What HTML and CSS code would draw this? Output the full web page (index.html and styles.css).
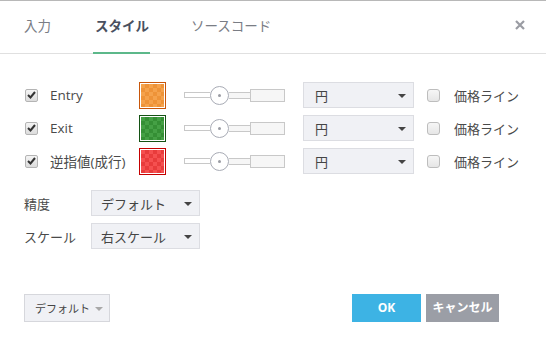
FILE: index.html
```html
<!DOCTYPE html>
<html>

<head>
    <title>スタイル</title>
    <link rel="stylesheet" href="styles.css">
</head>

<body>
    <div class="dialog">
        <div class="header">
            <div class="tab">入力</div>
            <div class="tab active">スタイル</div>
            <div class="tab">ソースコード</div>
            <div class="close">
                <svg width="10" height="10" viewBox="0 0 10 10">
                    <path d="M1 1 L9 9 M9 1 L1 9" stroke="#9a9ca3" stroke-width="2.2"/>
                </svg>
            </div>
        </div>

        <div class="content">
            <div class="plots">
                <div class="plot-row">
                    <span class="check checked"><svg width="9" height="8" viewBox="0 0 9 8"><path d="M1 4 L3.5 6.5 L8 1" stroke="#333" stroke-width="2" fill="none"/></svg></span>
                    <span class="plot-label">Entry</span>
                    <span class="swatch orange"><span class="swatch-fill"></span></span>
                    <span class="slider">
                        <span class="track-left"></span>
                        <span class="thumb"><span class="dot"></span></span>
                        <span class="track-mid"></span>
                        <span class="track-box"></span>
                    </span>
                    <div class="select wide">円<span class="arrow"></span></div>
                    <span class="check"></span>
                    <span class="price-label">価格ライン</span>
                </div>
                <div class="plot-row">
                    <span class="check checked"><svg width="9" height="8" viewBox="0 0 9 8"><path d="M1 4 L3.5 6.5 L8 1" stroke="#333" stroke-width="2" fill="none"/></svg></span>
                    <span class="plot-label">Exit</span>
                    <span class="swatch green"><span class="swatch-fill"></span></span>
                    <span class="slider">
                        <span class="track-left"></span>
                        <span class="thumb"><span class="dot"></span></span>
                        <span class="track-mid"></span>
                        <span class="track-box"></span>
                    </span>
                    <div class="select wide">円<span class="arrow"></span></div>
                    <span class="check"></span>
                    <span class="price-label">価格ライン</span>
                </div>
                <div class="plot-row">
                    <span class="check checked"><svg width="9" height="8" viewBox="0 0 9 8"><path d="M1 4 L3.5 6.5 L8 1" stroke="#333" stroke-width="2" fill="none"/></svg></span>
                    <span class="plot-label">逆指値(成行)</span>
                    <span class="swatch red"><span class="swatch-fill"></span></span>
                    <span class="slider">
                        <span class="track-left"></span>
                        <span class="thumb"><span class="dot"></span></span>
                        <span class="track-mid"></span>
                        <span class="track-box"></span>
                    </span>
                    <div class="select wide">円<span class="arrow"></span></div>
                    <span class="check"></span>
                    <span class="price-label">価格ライン</span>
                </div>
            </div>

            <div class="settings">
                <div class="setting-row">
                    <span class="setting-label">精度</span>
                    <div class="select narrow">デフォルト<span class="arrow"></span></div>
                </div>
                <div class="setting-row">
                    <span class="setting-label">スケール</span>
                    <div class="select narrow">右スケール<span class="arrow"></span></div>
                </div>
            </div>
        </div>

        <div class="footer">
            <div class="defaults-btn">デフォルト<span class="arrow light"></span></div>
            <div class="buttons">
                <div class="btn ok">OK</div>
                <div class="btn cancel">キャンセル</div>
            </div>
        </div>
    </div>
</body>

</html>
```

FILE: styles.css
```css
body {
    margin: 0;
    font-family: "Open Sans", "Noto Sans CJK JP", sans-serif;
    font-size: 13px;
    color: #4a4a4a;
    background: #fff;
}

.dialog {
    width: 546px;
    height: 347px;
    box-sizing: border-box;
    border-top: 1px solid #b8b8b8;
    display: flex;
    flex-direction: column;
}

.header {
    height: 53px;
    box-sizing: border-box;
    border-bottom: 1px solid #e0e0e0;
    display: flex;
    align-items: stretch;
    padding-left: 24px;
}

.tab {
    display: flex;
    align-items: center;
    padding-bottom: 3px;
    margin-bottom: -1px;
    border-bottom: 2px solid transparent;
    color: #7a7d85;
    font-size: 13.5px;
    box-sizing: border-box;
    margin-right: 44px;
}

.tab.active {
    color: #4a5060;
    font-weight: 700;
    border-bottom-color: #5cb88a;
    padding: 0 1px 3px 2px;
    margin-left: -2px;
    margin-right: 41px;
}

.close {
    margin-left: auto;
    margin-right: 21px;
    display: flex;
    align-items: center;
    padding-bottom: 5px;
}

.content {
    padding: 28px 0 0 25px;
}

.plots {
    display: flex;
    flex-direction: column;
    gap: 7px;
}

.plot-row {
    display: flex;
    align-items: center;
    height: 26px;
}

.check {
    width: 11px;
    height: 11px;
    border: 1px solid #b4b4b4;
    border-radius: 2px;
    background: linear-gradient(#f4f4f4, #dcdcdc);
    display: flex;
    align-items: center;
    justify-content: center;
    flex: none;
}

.plot-label {
    width: 89px;
    margin-left: 12px;
    font-size: 13.5px;
}

.swatch {
    width: 27px;
    height: 27px;
    box-sizing: border-box;
    border: 1px solid;
    padding: 1px;
    background: #fff;
    display: flex;
}

.swatch-fill {
    flex: 1;
    background-size: 8px 8px;
}

.swatch.orange {
    border-color: #c8560a;
}

.swatch.orange .swatch-fill {
    background-color: #f5a24c;
    background-image: conic-gradient(#ee9338 25%, transparent 0 50%, #ee9338 0 75%, transparent 0);
}

.swatch.green {
    border-color: #145214;
}

.swatch.green .swatch-fill {
    background-color: #45a045;
    background-image: conic-gradient(#358f35 25%, transparent 0 50%, #358f35 0 75%, transparent 0);
}

.swatch.red {
    border-color: #c40000;
}

.swatch.red .swatch-fill {
    background-color: #f55050;
    background-image: conic-gradient(#e83c3c 25%, transparent 0 50%, #e83c3c 0 75%, transparent 0);
}

.slider {
    margin-left: 18px;
    width: 101px;
    display: flex;
    align-items: center;
}

.track-left {
    width: 25px;
    height: 4px;
    border: 1px solid #c8c8c8;
    border-right: none;
    background: #fff;
}

.thumb {
    width: 17px;
    height: 17px;
    border: 1px solid #a8abb5;
    border-radius: 50%;
    background: #fff;
    display: flex;
    align-items: center;
    justify-content: center;
    flex: none;
}

.dot {
    width: 3px;
    height: 3px;
    border-radius: 50%;
    background: #9a9ca3;
}

.track-mid {
    width: 21px;
    height: 5px;
    border: 1px solid #c8c8c8;
    border-left: none;
    border-right: none;
    background: #f6f6f6;
}

.track-box {
    flex: 1;
    height: 11px;
    border: 1px solid #c8c8c8;
    background: #f6f6f6;
}

.select {
    position: relative;
    height: 26px;
    box-sizing: border-box;
    border: 1px solid #dcdde2;
    background: #f0f1f5;
    display: flex;
    align-items: center;
    color: #444;
}

.select.wide {
    width: 111px;
    margin-left: 18px;
    padding-left: 11px;
}

.select.narrow {
    width: 109px;
    padding-left: 9px;
}

.arrow {
    position: absolute;
    right: 7px;
    top: 11px;
    border-left: 4px solid transparent;
    border-right: 4px solid transparent;
    border-top: 4px solid #444;
}

.arrow.light {
    border-top-color: #a8a8a8;
    right: 6px;
    top: 12px;
}

.plot-row .check:not(.checked) {
    margin-left: 13px;
    background: linear-gradient(#f6f6f6, #e6e6e6);
    border-color: #bdbdbd;
    border-radius: 3px;
}

.price-label {
    margin-left: 14px;
}

.settings {
    margin-top: 16px;
    margin-left: -1px;
    display: flex;
    flex-direction: column;
    gap: 7px;
}

.setting-row {
    display: flex;
    align-items: center;
}

.setting-label {
    width: 67px;
}

.footer {
    margin-top: auto;
    padding: 0 47px 25px 24px;
    display: flex;
    justify-content: space-between;
}

.defaults-btn {
    position: relative;
    width: 86px;
    height: 28px;
    box-sizing: border-box;
    border: 1px solid #d6d7dc;
    background: #f0f1f5;
    padding-left: 10px;
    font-size: 11px;
    color: #444;
    display: flex;
    align-items: center;
}

.buttons {
    display: flex;
    gap: 5px;
}

.btn {
    height: 28px;
    display: flex;
    align-items: center;
    justify-content: center;
    color: #fff;
    font-weight: 700;
    font-size: 12px;
    padding-bottom: 2px;
    box-sizing: border-box;
}

.btn.ok {
    width: 69px;
    background: #3db3e4;
}

.btn.cancel {
    width: 73px;
    background: #9b9ea6;
}
```
